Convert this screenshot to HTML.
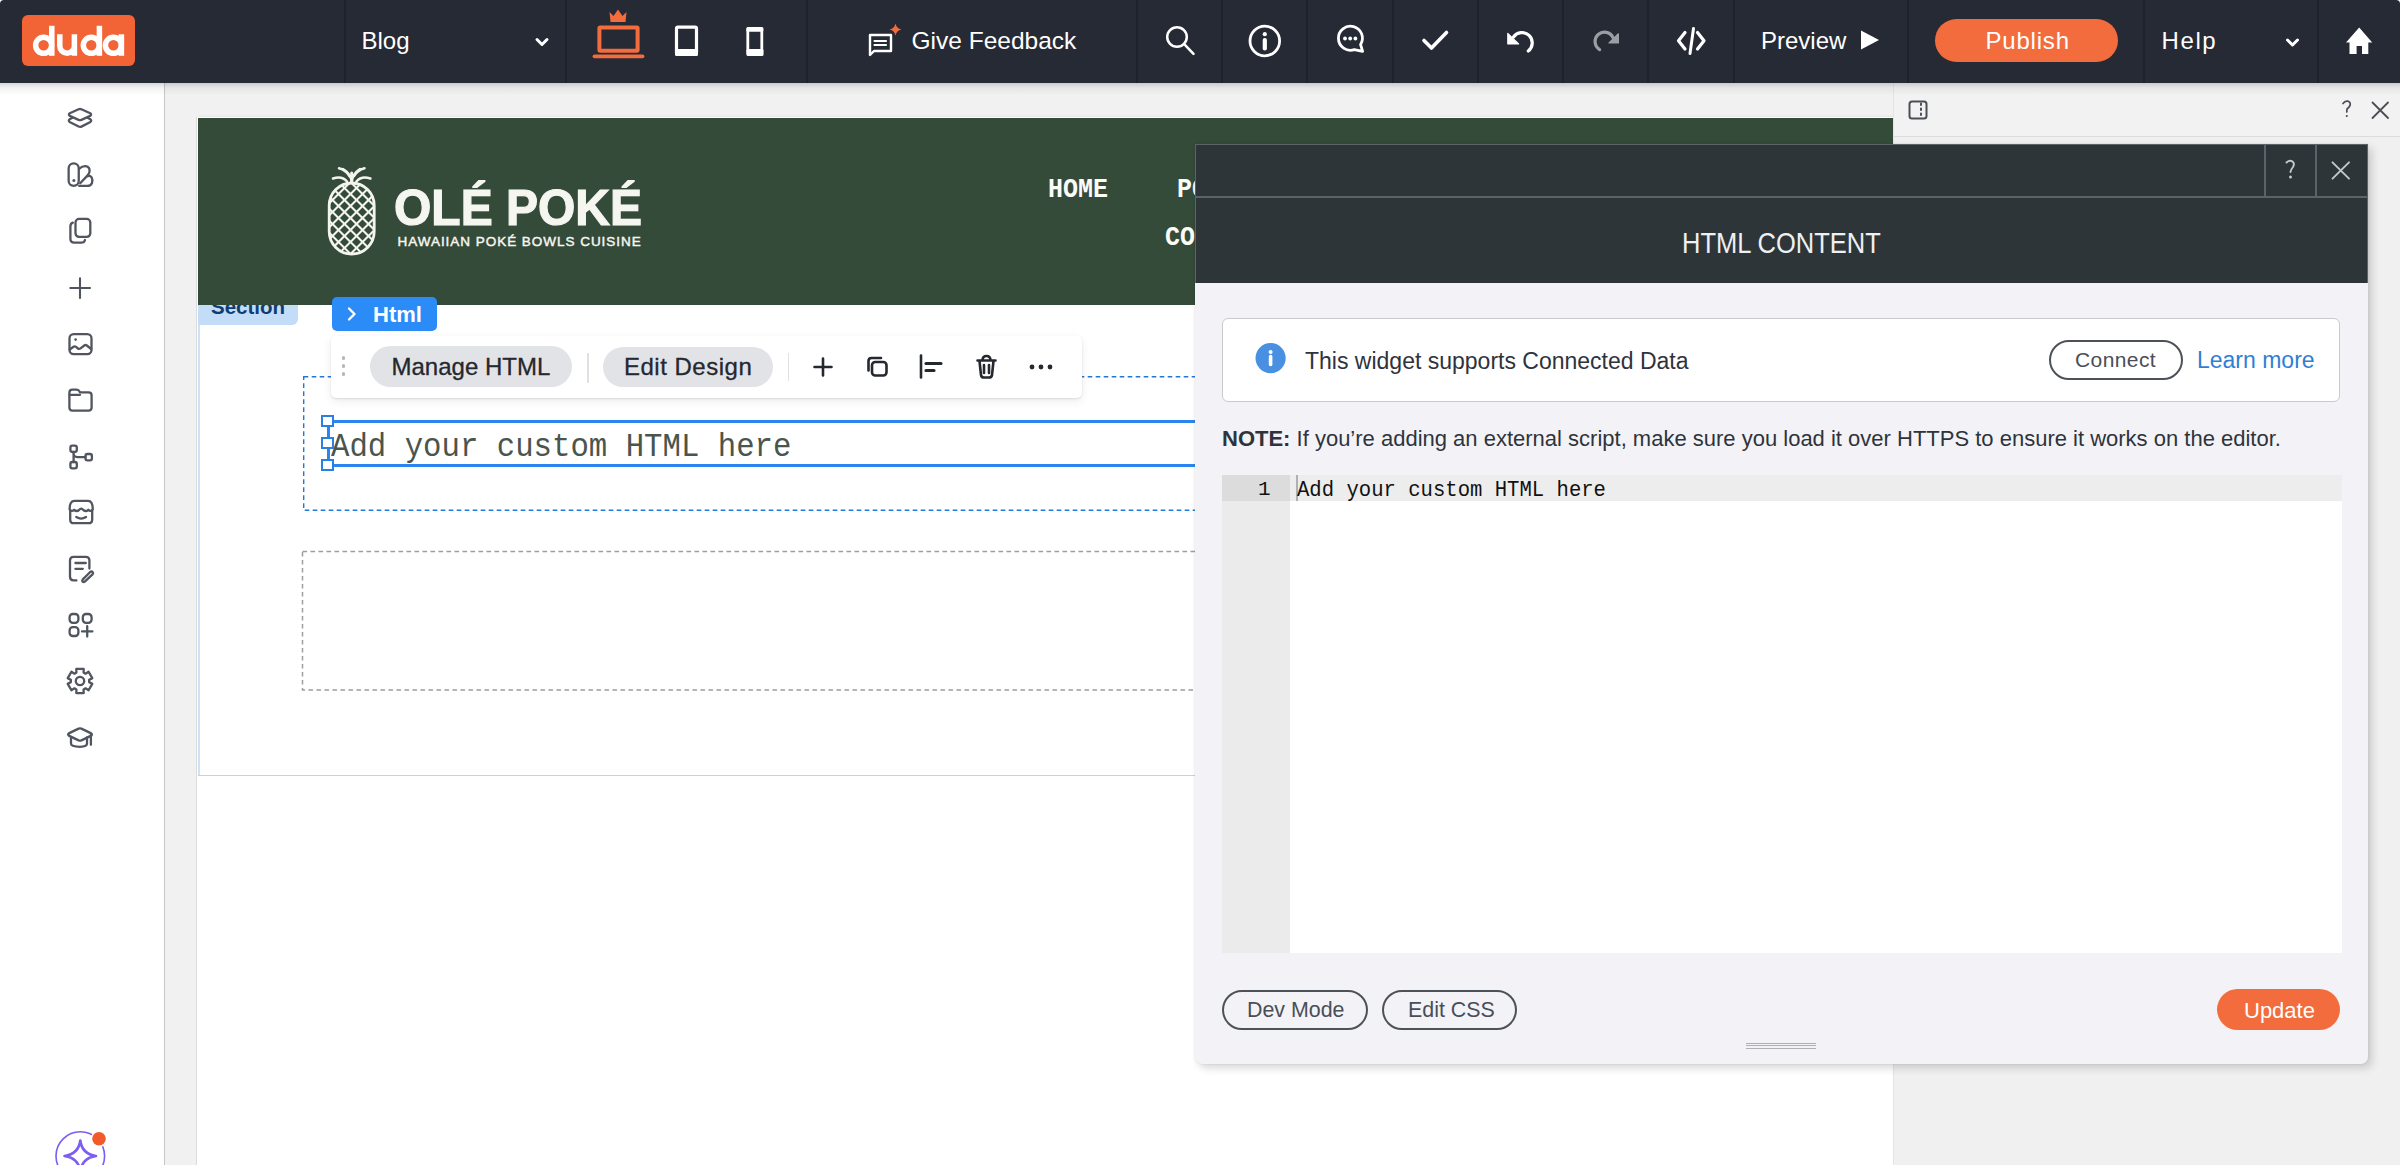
<!DOCTYPE html>
<html><head><meta charset="utf-8">
<style>
*{margin:0;padding:0;box-sizing:border-box}
html,body{width:2400px;height:1165px;overflow:hidden;background:#f1f1f1;font-family:"Liberation Sans",sans-serif}
.a{position:absolute}
svg{position:absolute;overflow:visible}
#top{left:0;top:0;width:2400px;height:83px;background:#262a35;border-radius:4px 4px 0 0}
.dv{position:absolute;top:0;width:2px;height:83px;background:#1f222b}
.tt{position:absolute;color:#fff;font-size:24px;line-height:24px;white-space:nowrap}
</style></head><body>

<!-- canvas background / shadow under top bar -->

<!-- left sidebar -->
<div class="a" id="side" style="left:0;top:83px;width:165px;height:1082px;background:#fff;border-right:1.5px solid #c6c6c6"></div>

<!-- sidebar icons -->
<svg style="left:40px;top:1110px" width="90" height="55">
  <circle cx="80.3" cy="46" r="24.3" transform="translate(-40,0)" fill="#fff" stroke="#7b5cf5" stroke-width="1.6"/>
  <path d="M40.3 30.5 Q42 44 56 46 Q42 48 40.3 61.5 Q38.6 48 24.5 46 Q38.6 44 40.3 30.5 Z" fill="none" stroke="#7b5cf5" stroke-width="2.6" stroke-linejoin="round"/>
  <circle cx="59" cy="28.8" r="8.3" fill="#fff"/>
  <circle cx="59" cy="28.8" r="6.8" fill="#f25a2c"/>
</svg>
<svg style="left:66px;top:104px" width="28" height="28" fill="none" stroke="#50555f" stroke-width="2.3" stroke-linecap="round" stroke-linejoin="round"><path d="M3.8 9.2 L12.6 5.3 Q14 4.7 15.4 5.3 L24.2 9.2 Q26 10.6 24.2 11.9 L15.4 15.9 Q14 16.5 12.6 15.9 L3.8 11.9 Q2 10.6 3.8 9.2 Z"/><path d="M6 14 L3.6 15.3 Q2 16.6 3.6 17.9 L12.6 22.6 Q14 23.3 15.4 22.6 L24.4 17.9 Q26 16.6 24.4 15.3 L22 14"/></svg>
<svg style="left:66px;top:161px" width="28" height="28" fill="none" stroke="#50555f" stroke-width="2.3" stroke-linecap="round" stroke-linejoin="round"><rect x="2.65" y="2.35" width="10.1" height="22.5" rx="5"/><circle cx="7.85" cy="19.6" r="1.5" fill="#50555f" stroke="none"/><path d="M13 7.8 Q16.5 4.8 19.8 5.1 Q23.8 5.8 23.6 10.2 Q23.4 12.6 21.4 14.6 L14.2 22.2"/><path d="M21.6 15.2 Q24.2 14.2 25.6 16.4 Q27 19 26 22 Q24.8 24.9 21.4 24.9 L13.2 24.9"/></svg>
<svg style="left:66px;top:217px" width="28" height="28" fill="none" stroke="#50555f" stroke-width="2.3" stroke-linecap="round" stroke-linejoin="round"><rect x="9.5" y="1.9" width="14.8" height="18" rx="3.6"/><path d="M6.8 5.6 Q4.4 6.5 4.4 9.6 L4.4 21.8 Q4.4 25.7 8.3 25.7 L15.3 25.7 Q18.3 25.7 19 23"/></svg>
<svg style="left:66px;top:273.5px" width="28" height="28" fill="none" stroke="#50555f" stroke-width="2.3" stroke-linecap="round" stroke-linejoin="round"><path d="M14 4.2 V24 M4.3 14 H24" stroke-width="2.1"/></svg>
<svg style="left:66px;top:329.5px" width="28" height="28" fill="none" stroke="#50555f" stroke-width="2.3" stroke-linecap="round" stroke-linejoin="round"><rect x="3.5" y="4.2" width="22" height="20" rx="4.2"/><circle cx="9.6" cy="9.6" r="1.3" fill="#50555f" stroke="none"/><path d="M3.8 19.5 L7.5 16.8 Q8.8 15.9 10 16.8 L12 18.5 Q13.2 19.4 14.5 18.4 L18.3 15.5 Q19.6 14.6 20.8 15.5 L25.2 19"/></svg>
<svg style="left:66px;top:385.5px" width="28" height="28" fill="none" stroke="#50555f" stroke-width="2.3" stroke-linecap="round" stroke-linejoin="round"><path d="M3.4 6.6 Q3.4 3.6 6.4 3.6 L10.6 3.6 Q12.3 3.6 13.2 5 L14 6.3 L22.6 6.3 Q25.6 6.3 25.6 9.3 L25.6 21.6 Q25.6 24.6 22.6 24.6 L6.4 24.6 Q3.4 24.6 3.4 21.6 Z"/><path d="M3.6 8.8 L14 8.8"/></svg>
<svg style="left:66px;top:443px" width="28" height="28" fill="none" stroke="#50555f" stroke-width="2.3" stroke-linecap="round" stroke-linejoin="round"><rect x="4.4" y="2.6" width="6.4" height="6.4" rx="1.9"/><rect x="4.4" y="19" width="6.4" height="6.4" rx="1.9"/><rect x="19.5" y="11" width="6.4" height="6.4" rx="1.9"/><path d="M7.6 9 V19 M7.6 11.5 Q8.5 14.2 12 14.2 L19.5 14.2"/></svg>
<svg style="left:66px;top:498px" width="28" height="28" fill="none" stroke="#50555f" stroke-width="2.3" stroke-linecap="round" stroke-linejoin="round"><path d="M4.2 12.5 L4.2 21.4 Q4.2 25.2 8 25.2 L22.4 25.2 Q26.2 25.2 26.2 21.4 L26.2 12.5"/><path d="M3.6 11.3 Q3.6 2.9 8.4 2.9 L22 2.9 Q26.8 2.9 26.8 11.3 Q24.8 14.2 22.3 11.8 Q19.7 14.2 17.2 11.8 Q15.2 9.5 13.2 11.8 Q10.7 14.2 8.2 11.8 Q5.6 14.2 3.6 11.3"/><path d="M10.3 19 Q15.2 22.2 20 19"/></svg>
<svg style="left:66px;top:555px" width="28" height="28" fill="none" stroke="#50555f" stroke-width="2.3" stroke-linecap="round" stroke-linejoin="round"><path d="M10.4 25.4 L7.6 25.4 Q4 25.4 4 21.8 L4 5.4 Q4 1.8 7.6 1.8 L19.8 1.8 Q23.4 1.8 23.4 5.4 L23.4 13.5"/><path d="M9.4 8 H19.8 M9.4 13.8 H16.8"/><path d="M16.6 24.6 L24.2 17 Q25.6 15.9 26.6 17 Q27.6 18.2 26.5 19.4 L18.8 26.6 Q17.6 27.4 16.6 26.6 Q15.8 25.6 16.6 24.6 Z"/></svg>
<svg style="left:66px;top:611px" width="28" height="28" fill="none" stroke="#50555f" stroke-width="2.3" stroke-linecap="round" stroke-linejoin="round"><rect x="3.6" y="3" width="8.8" height="8.8" rx="3.2"/><rect x="16.8" y="3" width="8.8" height="8.8" rx="3.2"/><rect x="3.6" y="16.2" width="8.8" height="8.8" rx="3.2"/><path d="M21.2 15.2 V25.6 M16 20.4 H26.4"/></svg>
<svg style="left:66px;top:667px" width="28" height="28" fill="none" stroke="#50555f" stroke-width="2.3" stroke-linecap="round" stroke-linejoin="round"><path d="M10.32 1.95 L17.68 1.95 L17.59 5.53 L19.54 6.65 L22.59 4.78 L26.28 11.17 L23.13 12.88 L23.13 15.12 L26.28 16.83 L22.59 23.22 L19.54 21.35 L17.59 22.47 L17.68 26.05 L10.32 26.05 L10.41 22.47 L8.46 21.35 L5.41 23.22 L1.72 16.83 L4.87 15.12 L4.87 12.88 L1.72 11.17 L5.41 4.78 L8.46 6.65 L10.41 5.53 Z"/><circle cx="14" cy="14" r="4.2"/></svg>
<svg style="left:66px;top:724px" width="28" height="28" fill="none" stroke="#50555f" stroke-width="2.3" stroke-linecap="round" stroke-linejoin="round"><path d="M12.6 4.6 Q14 4 15.4 4.6 L25.2 9.4 Q26.6 10.5 25.2 11.6 L15.4 16.4 Q14 17 12.6 16.4 L2.8 11.6 Q1.4 10.5 2.8 9.4 Z"/><path d="M5 13.4 L5 19.6 Q5 22.8 14 22.8 Q21 22.8 21 19.6 L21 13.4"/><path d="M24.9 11.2 V20.8"/></svg>

<!-- site page -->
<div class="a" style="left:197px;top:116.5px;width:1700px;height:1049px;background:#fff;box-shadow:-1px 0 0 #dcdcdc, 0 -1px 2px rgba(0,0,0,.05)"></div>
<!-- section tag (under header) -->
<div class="a" style="left:198px;top:290px;width:100px;height:35px;background:#c3dcf8;border-radius:0 0 6px 0"></div>
<div class="tt" style="left:211px;top:296.5px;font-size:20.5px;line-height:20px;font-weight:bold;color:#0f3d73">Section</div>
<div class="a" style="left:198px;top:118px;width:1700px;height:187px;background:#344b3a"></div>
<!-- section outline -->
<div class="a" style="left:198px;top:325px;width:2px;height:451px;background:#cfe2f8"></div>
<div class="a" style="left:198px;top:774.5px;width:1000px;height:1.5px;background:#b9d5f3"></div>

<!-- logo -->
<svg style="left:320px;top:160px" width="70" height="100" viewBox="0 0 70 100">
  <defs><clipPath id="pc"><rect x="9.2" y="23" width="45" height="71" rx="22.5"/></clipPath></defs>
  <g clip-path="url(#pc)" stroke="#f4f4ef" stroke-width="2.05">
    <path d="M-120 0 L0 120 M-108 0 L12 120 M-96 0 L24 120 M-84 0 L36 120 M-72 0 L48 120 M-60 0 L60 120 M-48 0 L72 120 M-36 0 L84 120 M-24 0 L96 120 M-12 0 L108 120 M0 0 L120 120 M12 0 L132 120 M24 0 L144 120 M36 0 L156 120 M48 0 L168 120 M60 0 L180 120 M72 0 L192 120" transform="translate(4.5,20)"/>
    <path d="M-20 0 L-140 120 M-8 0 L-128 120 M4 0 L-116 120 M16 0 L-104 120 M28 0 L-92 120 M40 0 L-80 120 M52 0 L-68 120 M64 0 L-56 120 M76 0 L-44 120 M88 0 L-32 120 M100 0 L-20 120 M112 0 L-8 120 M124 0 L4 120 M136 0 L16 120 M148 0 L28 120 M160 0 L40 120 M172 0 L52 120 M184 0 L64 120 M196 0 L76 120" transform="translate(4.5,20)"/>
  </g>
  <rect x="9.2" y="23" width="45" height="71" rx="22.5" fill="none" stroke="#f4f4ef" stroke-width="2.8"/>
  <g fill="none" stroke="#f4f4ef" stroke-width="2.5" stroke-linecap="round">
    <path d="M31.7 22 Q31 14 23 9"/>
    <path d="M31.7 22 Q32.4 14 40 9"/>
    <path d="M27 21.5 Q22 15.5 13 18.5"/>
    <path d="M36.4 21.5 Q41.4 15.5 50.4 18.5"/>
    <path d="M29.5 16 Q26 10 19 8.2"/>
    <path d="M34 16 Q37.5 10 44.5 8.2"/>
    <path d="M31.7 22 V13" stroke-width="3"/>
  </g>
</svg>
<div class="tt" style="left:394px;top:183px;font-size:50px;line-height:50px;font-weight:bold;color:#f6f6f1;transform:scaleX(0.96);transform-origin:0 0;-webkit-text-stroke:1.2px #f6f6f1">OLÉ POKÉ</div>
<div class="tt" style="left:397.5px;top:234.5px;font-size:13.5px;line-height:14px;color:#f6f6f1;letter-spacing:0.97px;-webkit-text-stroke:0.45px #f6f6f1">HAWAIIAN POKÉ BOWLS CUISINE</div>

<!-- nav -->
<div class="tt" style="left:1048px;top:176px;font-family:'Liberation Mono',monospace;font-size:25px;line-height:25px;font-weight:bold;color:#fbfbf8;transform:scaleY(1.1);transform-origin:0 0">HOME</div>
<div class="tt" style="left:1177px;top:176px;font-family:'Liberation Mono',monospace;font-size:25px;line-height:25px;font-weight:bold;color:#fbfbf8;transform:scaleY(1.1);transform-origin:0 0">PO</div>
<div class="tt" style="left:1165px;top:224px;font-family:'Liberation Mono',monospace;font-size:25px;line-height:25px;font-weight:bold;color:#fbfbf8;transform:scaleY(1.1);transform-origin:0 0">CO</div>

<!-- widget outlines -->
<svg style="left:0;top:0" width="1200" height="800"><rect x="303.7" y="376.7" width="1000" height="133.6" fill="none" stroke="#2378d6" stroke-width="1.4" stroke-dasharray="4.6 3.4"/><rect x="302.5" y="551.5" width="1000" height="138.5" fill="none" stroke="#9d9d9d" stroke-width="1.5" stroke-dasharray="4.6 3.4"/></svg>

<!-- selection -->
<div class="a" style="left:327px;top:419.6px;width:880px;height:3px;background:#2a86ee"></div>
<div class="a" style="left:327px;top:463.9px;width:880px;height:3px;background:#2a86ee"></div>
<div class="a" style="left:326.5px;top:421px;width:3.2px;height:44px;background:#2a86ee"></div>
<div class="tt" style="left:331px;top:431px;font-family:'Liberation Mono',monospace;font-size:30.7px;line-height:30px;color:#4a554d;transform:scaleY(1.07);transform-origin:0 0">Add your custom HTML here</div>
<div class="a" style="left:321.3px;top:414.5px;width:12.5px;height:12px;background:#fff;border:2.1px solid #2a7fe0"></div>
<div class="a" style="left:321.3px;top:437.3px;width:12.5px;height:12px;background:#fff;border:2.1px solid #2a7fe0"></div>
<div class="a" style="left:321.3px;top:459px;width:12.5px;height:12px;background:#fff;border:2.1px solid #2a7fe0"></div>

<!-- html label -->
<div class="a" style="left:332px;top:297px;width:104.5px;height:33.5px;background:#2b8cf7;border-radius:5px"></div>
<svg style="left:340px;top:300px" width="30" height="28"><path d="M9 8.5 L14.5 14 L9 19.5" fill="none" stroke="#fff" stroke-width="2.4" stroke-linecap="round" stroke-linejoin="round"/></svg>
<div class="tt" style="left:373px;top:303.5px;font-size:22px;line-height:21px;font-weight:bold;color:#fff">Html</div>

<!-- toolbar -->
<div class="a" style="left:331px;top:336px;width:751px;height:62px;background:#fff;border-radius:5px;box-shadow:0 1px 2px rgba(0,0,0,.10), 0 3px 10px rgba(0,0,0,.08)"></div>
<div class="a" style="left:341.5px;top:356px;width:3.8px;height:3.8px;border-radius:50%;background:#b5b5b5"></div>
<div class="a" style="left:341.5px;top:364.3px;width:3.8px;height:3.8px;border-radius:50%;background:#b5b5b5"></div>
<div class="a" style="left:341.5px;top:372.1px;width:3.8px;height:3.8px;border-radius:50%;background:#b5b5b5"></div>
<div class="a" style="left:369.5px;top:346px;width:202.5px;height:41px;background:#e2e3e7;border-radius:21px"></div>
<div class="tt" style="left:391.5px;top:355px;font-size:24px;line-height:24px;color:#25282e;-webkit-text-stroke:0.3px #25282e">Manage HTML</div>
<div class="a" style="left:587px;top:352.5px;width:1.5px;height:30px;background:#e1e1e1"></div>
<div class="a" style="left:602.5px;top:346.5px;width:170.5px;height:40.5px;background:#e2e3e7;border-radius:21px"></div>
<div class="tt" style="left:624px;top:355px;font-size:24px;line-height:24px;color:#25282e;letter-spacing:0.5px;-webkit-text-stroke:0.3px #25282e">Edit Design</div>
<div class="a" style="left:787.5px;top:352.5px;width:1.5px;height:28px;background:#e1e1e1"></div>
<svg style="left:800px;top:340px" width="280" height="56" fill="none" stroke="#25282e" stroke-width="2.6" stroke-linecap="round" stroke-linejoin="round">
  <path d="M23 18.5 V35.5 M14.5 27 H31.5"/>
  <rect x="72" y="22" width="14.5" height="13.5" rx="3.2"/>
  <path d="M68.5 30.5 V21 Q68.5 18 71.5 18 L81 18"/>
  <path d="M121 15.5 V37.5"/>
  <path d="M126 23.5 H141 M126 30.5 H134" stroke-width="3.2"/>
  <path d="M177.5 20.5 H195.5 M182.5 20.5 Q182.5 16 186.5 16 Q190.5 16 190.5 20.5 M179.5 21 L181 35 Q181.3 37.5 184 37.5 L189 37.5 Q191.7 37.5 192 35 L193.5 21 M184 25 V33 M189 25 V33"/>
  <circle cx="232" cy="27" r="2.4" fill="#25282e" stroke="none"/><circle cx="241" cy="27" r="2.4" fill="#25282e" stroke="none"/><circle cx="250" cy="27" r="2.4" fill="#25282e" stroke="none"/>
</svg>

<!-- right panel -->
<div class="a" style="left:1893px;top:83px;width:507px;height:1082px;background:#f0f0f0;border-left:1px solid #e4e4e4"></div>
<div class="a" style="left:1894px;top:83px;width:506px;height:54px;background:#f2f2f2;border-bottom:1.5px solid #dcdcdc"></div>
<svg style="left:1900px;top:92px" width="500" height="40" fill="none" stroke="#4a4e55" stroke-linecap="round">
  <rect x="9.5" y="9.5" width="17" height="17" rx="2.5" stroke-width="2"/>
  <path d="M21 11.5 V13 M21 16.5 V18 M21 21.5 V23" stroke-width="2"/>
  <path d="M443 11.5 Q445 8.5 448 9.2 Q451 10.2 450 13.5 Q449 15.5 447 17 L446.8 20" stroke-width="1.7"/>
  <circle cx="446.8" cy="24" r="1.1" fill="#4a4e55" stroke="none"/>
  <path d="M472.5 10.5 L488 26 M488 10.5 L472.5 26" stroke-width="1.8"/>
</svg>

<div class="a" style="left:0;top:0;width:2400px;height:8px;background:#fff"></div>
<!-- top bar -->
<div class="a" id="top">
  <div class="a" style="left:22px;top:15px;width:113px;height:51px;background:#f26436;border-radius:6px"></div>

  <svg style="left:0;top:0" width="140" height="83" fill="none" stroke="#fff" stroke-width="5.5">
    <circle cx="43.6" cy="45.3" r="8"/><path d="M51.8 25.8 V55.8"/>
    <path d="M59.8 34.3 V45.9 A7.3 7.3 0 0 0 74.4 45.9 V34.3 M74.4 44 V55.8"/>
    <circle cx="91.3" cy="45.3" r="8"/><path d="M99.4 25.8 V55.8"/>
    <circle cx="113.4" cy="45.3" r="8"/><path d="M121.4 34.3 V55.8"/>
  </svg>
  <svg style="left:0;top:0" width="2400" height="83">
    <!-- blog chevron -->
    <path d="M537 39.5 L542 44.5 L547 39.5" stroke="#fff" fill="none" stroke-linecap="round" stroke-linejoin="round" stroke-width="3"/>
    <!-- laptop -->
    <g fill="#f26c3e">
      <path d="M609.5 12 L613.5 16 L618 9.5 L622.5 16 L626.5 12 L625.5 22 L610.5 22 Z"/>
    </g>
    <rect x="599.4" y="27.6" width="38.2" height="23.2" rx="0.8" fill="none" stroke="#f26c3e" stroke-width="4"/>
    <path d="M594.5 56.3 H642.5" stroke="#f26c3e" stroke-width="3.8" stroke-linecap="round"/>
    <!-- tablet -->
    <rect x="676.5" y="27.2" width="20" height="27" rx="1.5" fill="none" stroke="#fff" stroke-width="3.2"/>
    <rect x="675" y="49" width="23" height="7" rx="1.5" fill="#fff"/>
    <!-- phone -->
    <rect x="747.8" y="28.5" width="14" height="25.8" rx="1.5" fill="none" stroke="#fff" stroke-width="2.8"/><rect x="746.4" y="27" width="17" height="4.8" rx="1.5" fill="#fff"/>
    <rect x="746.5" y="49" width="17" height="7" rx="1.5" fill="#fff"/>
    <!-- feedback chat -->
    <path d="M870 35 H891 V51 H874 L870 55 Z" stroke="#fff" fill="none" stroke-linecap="round" stroke-linejoin="round" stroke-width="2.4"/>
    <path d="M874.5 41 H886 M874.5 45 H886" stroke="#fff" fill="none" stroke-linecap="round" stroke-linejoin="round" stroke-width="2.2"/>
    <path d="M895.5 23.5 Q896.5 28.5 901.5 29.5 Q896.5 30.5 895.5 35.5 Q894.5 30.5 889.5 29.5 Q894.5 28.5 895.5 23.5 Z" fill="#f26c3e"/>
    <!-- search -->
    <circle cx="1177" cy="37" r="9.8" stroke="#fff" fill="none" stroke-linecap="round" stroke-linejoin="round" stroke-width="2.5"/>
    <path d="M1184.2 44.2 L1193.5 53.8" stroke="#fff" fill="none" stroke-linecap="round" stroke-linejoin="round" stroke-width="2.6"/>
    <!-- info -->
    <circle cx="1264.8" cy="41" r="14.8" stroke="#fff" fill="none" stroke-linecap="round" stroke-linejoin="round" stroke-width="2.8"/>
    <circle cx="1264.8" cy="34.2" r="2.1" fill="#fff"/>
    <path d="M1264.8 40 V48.5" stroke="#fff" fill="none" stroke-linecap="round" stroke-linejoin="round" stroke-width="4.2"/>
    <!-- chat -->
    <path d="M1360.6 44.6 A12 12 0 1 0 1354.3 49.6 L1362.6 51.4 Z" stroke="#fff" fill="none" stroke-linecap="round" stroke-linejoin="round" stroke-width="2.8"/>
    <circle cx="1345" cy="38.5" r="1.9" fill="#fff"/><circle cx="1350.2" cy="38.5" r="1.9" fill="#fff"/><circle cx="1355.4" cy="38.5" r="1.9" fill="#fff"/>
    <!-- check -->
    <path d="M1424 40.5 L1431.5 48 L1446.5 32.5" stroke="#fff" fill="none" stroke-linecap="round" stroke-linejoin="round" stroke-width="3.6"/>
    <!-- undo -->
    <path d="M1513.5 37 A10.3 10.3 0 1 1 1528.3 51" stroke="#fff" fill="none" stroke-width="3.2" stroke-linecap="round"/>
    <path d="M1507.8 33.4 L1507.8 44 L1518.6 44 Z" fill="#fff" stroke="#fff" stroke-width="1.2" stroke-linejoin="round"/>
    <!-- redo -->
    <path d="M1613 37.6 A9.4 9.4 0 1 0 1599.6 49.6" stroke="#9c9ea6" fill="none" stroke-width="3.2" stroke-linecap="round"/>
    <path d="M1618.4 33.8 L1618.4 43 L1609 43 Z" fill="#9c9ea6" stroke="#9c9ea6" stroke-width="1.2" stroke-linejoin="round"/>
    <!-- code -->
    <path d="M1685 32.5 L1678.5 40.7 L1685 49 M1697.5 32.5 L1704 40.7 L1697.5 49" stroke="#fff" fill="none" stroke-linecap="round" stroke-linejoin="round" stroke-width="3.2"/>
    <path d="M1693.5 28.5 L1690 53.5" stroke="#fff" fill="none" stroke-linecap="round" stroke-linejoin="round" stroke-width="3"/>
    <!-- play -->
    <path d="M1861 30.5 L1879 40 L1861 49.5 Z" fill="#fff"/>
    <!-- help chevron -->
    <path d="M2287.5 40 L2292.5 45 L2297.5 40" stroke="#fff" fill="none" stroke-linecap="round" stroke-linejoin="round" stroke-width="3"/>
    <!-- home -->
    <path d="M2359.2 27.5 L2372.2 42.5 L2368.3 42.5 L2368.3 54 L2362 54 L2362 46 L2356.6 46 L2356.6 54 L2349.5 54 L2349.5 42.5 L2346 42.5 Z" fill="#fff"/>
  </svg>
  <div class="dv" style="left:344px"></div>
  <div class="tt" style="left:361.5px;top:29px">Blog</div>
  <div class="dv" style="left:565px"></div>
  <div class="dv" style="left:806px"></div>
  <div class="tt" style="left:911.5px;top:29px;font-size:24.5px">Give Feedback</div>
  <div class="dv" style="left:1136px"></div>
  <div class="dv" style="left:1221px"></div>
  <div class="dv" style="left:1306px"></div>
  <div class="dv" style="left:1392px"></div>
  <div class="dv" style="left:1477px"></div>
  <div class="dv" style="left:1562px"></div>
  <div class="dv" style="left:1647px"></div>
  <div class="dv" style="left:1733px"></div>
  <div class="tt" style="left:1761px;top:29px">Preview</div>
  <div class="dv" style="left:1907px"></div>
  <div class="a" style="left:1935px;top:19px;width:183px;height:43px;background:#f26c3e;border-radius:22px"></div>
  <div class="tt" style="left:1985.5px;top:29px;letter-spacing:0.8px">Publish</div>
  <div class="dv" style="left:2143px"></div>
  <div class="tt" style="left:2161.5px;top:29px;letter-spacing:1.6px">Help</div>
  <div class="dv" style="left:2317px"></div>
</div>

<!-- modal -->
<div class="a" id="modal" style="left:1195px;top:144px;width:1173px;height:920px;background:#f3f3f7;border-radius:0 0 7px 7px;box-shadow:4px 4px 8px rgba(0,0,0,.16), 0 0 2px rgba(0,0,0,.12)">
  <div class="a" style="left:0;top:0;width:1173px;height:139px;background:#2e3539;border:1px solid #59636a;border-bottom:none"></div>
  <div class="a" style="left:0;top:52px;width:1173px;height:1.5px;background:#59636a"></div>
  <div class="a" style="left:1069px;top:0;width:1.5px;height:53px;background:#59636a"></div>
  <div class="a" style="left:1120px;top:0;width:1.5px;height:53px;background:#59636a"></div>
  <svg style="left:1085px;top:15px" width="30" height="25">
    <path d="M6.5 3.5 Q9.5 0.5 12.5 2.5 Q15 4.5 13 8 Q11 10.3 10.5 13" fill="none" stroke="#c3c7c9" stroke-width="1.9" stroke-linecap="round"/>
    <circle cx="10.5" cy="18" r="1.5" fill="#c3c7c9"/>
  </svg>
  <svg style="left:1130px;top:15px" width="30" height="25">
    <path d="M7.5 3.3 L24 19.7 M24 3.3 L7.5 19.7" stroke="#c3c7c9" stroke-width="1.9" stroke-linecap="round"/>
  </svg>
  <div class="tt" style="left:487px;top:84.5px;font-size:25.5px;line-height:25px;color:#eef0f1;transform:scaleY(1.12);transform-origin:0 0">HTML CONTENT</div>

  <!-- info box -->
  <div class="a" style="left:27px;top:174px;width:1118px;height:84px;background:#fff;border:1.5px solid #c9c9ce;border-radius:6px"></div>
  <svg style="left:60px;top:199px" width="32" height="32">
    <circle cx="15.6" cy="15.1" r="15.1" fill="#4a90e2"/>
    <circle cx="15.6" cy="9" r="2" fill="#fff"/>
    <path d="M15.6 13.5 V21.5" stroke="#fff" stroke-width="3.6" stroke-linecap="round"/>
  </svg>
  <div class="tt" style="left:110px;top:206px;font-size:23px;line-height:23px;color:#2f333b">This widget supports Connected Data</div>
  <div class="a" style="left:854px;top:196px;width:134px;height:40px;border:2px solid #4d5159;border-radius:20px"></div>
  <div class="tt" style="left:880px;top:204.5px;font-size:21px;line-height:21px;color:#4a4e57;letter-spacing:0.4px">Connect</div>
  <div class="tt" style="left:1002px;top:205px;font-size:23px;line-height:23px;color:#2f7fd5">Learn more</div>

  <!-- note -->
  <div class="tt" style="left:27px;top:284px;font-size:22px;line-height:22px;color:#2f333b"><b>NOTE:</b> If you’re adding an external script, make sure you load it over HTTPS to ensure it works on the editor.</div>

  <!-- editor -->
  <div class="a" style="left:27px;top:331px;width:1120px;height:478px;background:#fff"></div>
  <div class="a" style="left:27px;top:331px;width:68px;height:478px;background:#ebebeb"></div>
  <div class="a" style="left:95px;top:331px;width:1052px;height:26px;background:#ededed"></div>
  <div class="a" style="left:27px;top:331px;width:68px;height:26px;background:#dcdcdc"></div>
  <div class="a" style="left:101px;top:331px;width:2px;height:26px;background:#b0b0b0"></div>
  <div class="tt" style="left:63px;top:335px;font-family:'Liberation Mono',monospace;font-size:21px;line-height:21px;color:#111">1</div>
  <div class="tt" style="left:102px;top:335px;font-family:'Liberation Mono',monospace;font-size:20.6px;line-height:21px;color:#111;letter-spacing:0px;transform:scaleY(1.08);transform-origin:0 0">Add your custom HTML here</div>

  <!-- footer buttons -->
  <div class="a" style="left:27px;top:846px;width:146px;height:40px;border:2px solid #4d5159;border-radius:20px"></div>
  <div class="tt" style="left:52px;top:855.3px;font-size:21.4px;line-height:22px;color:#4a4e57">Dev Mode</div>
  <div class="a" style="left:187px;top:846px;width:135px;height:40px;border:2px solid #4d5159;border-radius:20px"></div>
  <div class="tt" style="left:213px;top:855.3px;font-size:21.4px;line-height:22px;color:#4a4e57">Edit CSS</div>
  <div class="a" style="left:1022px;top:845px;width:123px;height:41px;background:#f26c3e;border-radius:21px"></div>
  <div class="tt" style="left:1049px;top:856px;font-size:22px;line-height:22px;color:#fff">Update</div>
  <div class="a" style="left:551px;top:898.6px;width:70px;height:1.2px;background:#b0b0b4"></div>
  <div class="a" style="left:551px;top:901.1px;width:70px;height:1.2px;background:#b0b0b4"></div>
  <div class="a" style="left:551px;top:903.6px;width:70px;height:1.2px;background:#b0b0b4"></div>
</div>
<div class="a" style="left:0;top:83px;width:2400px;height:12px;background:linear-gradient(rgba(0,0,0,.16),rgba(0,0,0,.05) 40%,rgba(0,0,0,0))"></div>
</body></html>
